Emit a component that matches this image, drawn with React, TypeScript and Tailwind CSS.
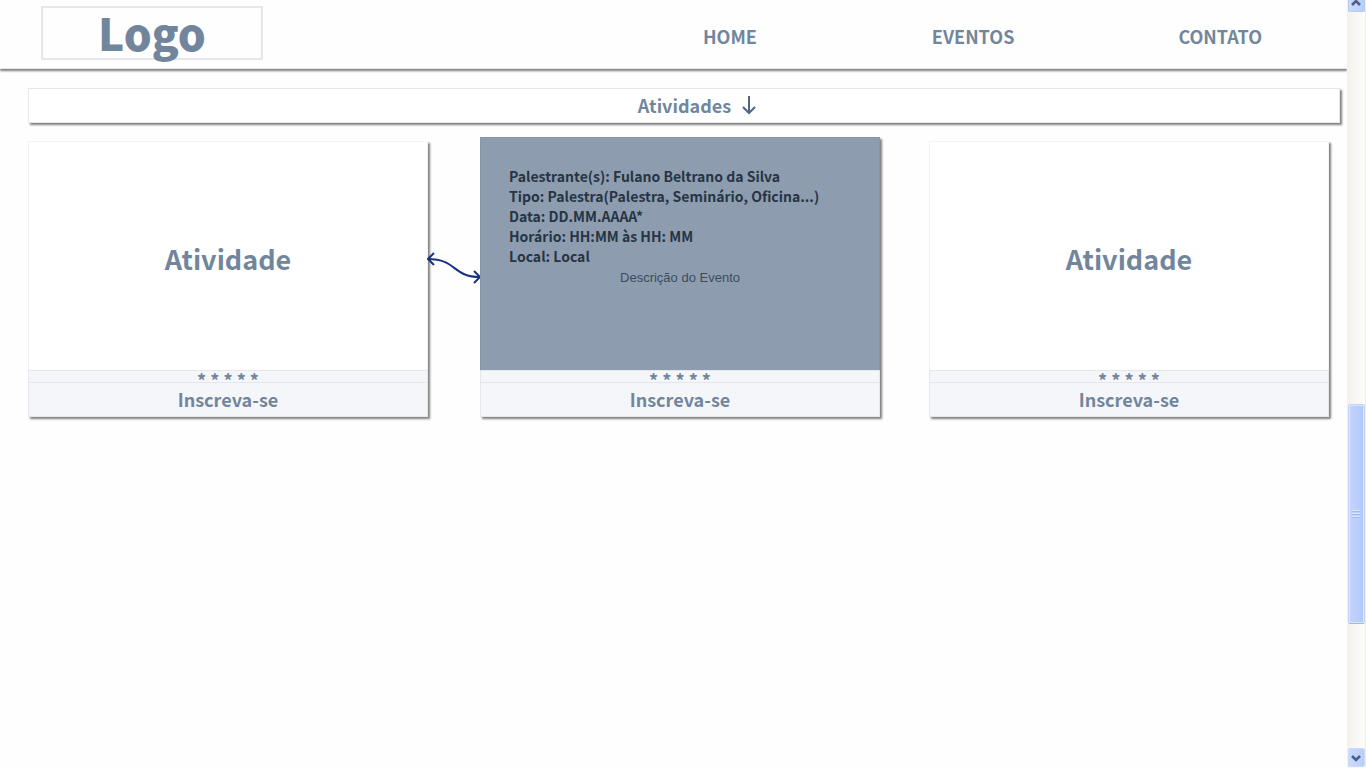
import { ReactNode } from "react";

const NAV_ITEMS = [
  { label: "HOME", href: "#home" },
  { label: "EVENTOS", href: "#eventos" },
  { label: "CONTATO", href: "#contato" },
];

const DETAILS = [
  "Palestrante(s): Fulano Beltrano da Silva",
  "Tipo: Palestra(Palestra, Seminário, Oficina...)",
  "Data: DD.MM.AAAA*",
  "Horário: HH:MM às HH: MM",
  "Local: Local",
];

function Header() {
  return (
    <header className="flex h-[69px] items-start border-b border-[#e4e8ed] pt-[6px] pl-[41px] shadow-[0_2px_2px_#808080]">
      <a
        href="#inicio"
        className="flex h-[54px] w-[222px] items-center justify-center border-2 border-[#e4e8ed] pb-[3px] text-[44px] leading-none font-black"
      >
        Logo
      </a>
      <nav className="ml-auto flex gap-[175px] pt-[15px] pr-[85px] text-[18px] leading-[30px]">
        {NAV_ITEMS.map((item) => (
          <a key={item.label} href={item.href} className="last:-ml-[11px]">
            {item.label}
          </a>
        ))}
      </nav>
    </header>
  );
}

function ActivityCard({ children }: { children: ReactNode }) {
  return (
    <article className="flex min-w-0 flex-col shadow-[2px_2px_2px_#808080]">
      {children}
      <div className="flex h-[12px] items-start justify-center border-x border-t border-[#e4e8ed] bg-[#f5f6fa] text-[18px] leading-[18px]">
        <span>* * * * *</span>
      </div>
      <button
        type="button"
        className="h-[35px] cursor-pointer border border-[#e4e8ed] bg-[#f5f6fa] pb-[2px] text-[18px] leading-[30px]"
      >
        Inscreva-se
      </button>
    </article>
  );
}

function TitlePanel() {
  return (
    <div className="flex h-[229px] items-center justify-center border border-b-0 border-[#f1f3f5] bg-white pt-[6px]">
      <h2 className="text-[27px] leading-[40px]">Atividade</h2>
    </div>
  );
}

function DetailPanel() {
  return (
    <div className="h-[233px] border border-b-0 border-[#8496a9] bg-[#8d9daf] px-[28px] pt-[28px] text-[#273444]">
      <ul className="text-[14px] leading-[20px] whitespace-nowrap">
        {DETAILS.map((line) => (
          <li key={line}>{line}</li>
        ))}
      </ul>
      <p className="pt-[2px] text-center font-['Liberation_Sans',sans-serif] text-[13px] leading-[20px] font-normal text-[#3c4c5e]">
        Descrição do Evento
      </p>
    </div>
  );
}

function Connector() {
  return (
    <svg
      viewBox="0 0 55 36"
      className="mx-[-1px] mb-[131px] h-[36px] w-[55px]"
      fill="none"
      stroke="#1b3281"
      strokeWidth="2"
      aria-hidden="true"
    >
      <path d="M1 9C30 9 25 27 53 27" />
      <path d="M7 3L1 9L7 15M47 21L53 27L47 33" />
    </svg>
  );
}

function Chevron({ up = false }: { up?: boolean }) {
  return (
    <svg viewBox="0 0 10 8" className="h-[8px] w-[10px]" fill="none" stroke="#4d6185" strokeWidth="2.6" aria-hidden="true">
      <path d={up ? "M1 5L5 1L9 5" : "M1 2L5 6L9 2"} />
    </svg>
  );
}

function ScrollRail() {
  return (
    <aside
      aria-label="Rolagem"
      className="flex w-[19px] shrink-0 flex-col items-center border-r border-[#eeede5] bg-linear-to-r from-[#f3f1ec] to-[#fefefb]"
    >
      <button
        type="button"
        aria-label="Rolar para cima"
        className="flex h-[12px] w-[17px] items-start justify-center rounded-b-[2px] border border-t-0 border-[#b4c8f6] bg-linear-to-r from-[#cbdafd] to-[#b7cefc]"
      >
        <Chevron up />
      </button>
      <div className="flex-[392_1_0%]" />
      <div className="flex h-[220px] w-[17px] flex-col items-center justify-center gap-px rounded-[2px] border border-[#c4d4f5] border-b-[#a0bae8] bg-linear-to-r from-[#c6d3fb] to-[#aecbfb] shadow-[inset_0_0_0_1px_#dce7ff]">
        <span className="h-[2px] w-[8px] border-b border-[#9dbcf5] bg-[#dce8ff]" />
        <span className="h-[2px] w-[8px] border-b border-[#9dbcf5] bg-[#dce8ff]" />
        <span className="h-[2px] w-[8px] border-b border-[#9dbcf5] bg-[#dce8ff]" />
      </div>
      <div className="flex-[124_1_0%]" />
      <button
        type="button"
        aria-label="Rolar para baixo"
        className="mb-px flex h-[19px] w-[17px] items-center justify-center rounded-[2px] border border-[#c9d8fb] bg-linear-to-r from-[#cbdafd] to-[#b7cefc]"
      >
        <Chevron />
      </button>
    </aside>
  );
}

export default function App() {
  return (
    <div className="flex min-h-screen bg-[#fefefe] font-['Noto_Sans_CJK_JP',sans-serif] font-bold text-[#71869c]">
      <div className="min-w-0 flex-1">
        <Header />
        <main className="pt-[19px] pr-[7px] pl-[28px]">
          <button
            type="button"
            className="flex h-[35px] w-full cursor-pointer items-center justify-center gap-[11px] border border-[#e4e8ed] bg-white pb-[2px] pl-[26px] text-[18px] leading-[30px] shadow-[2px_2px_2px_#808080]"
          >
            Atividades
            <svg viewBox="0 0 14 20" className="h-[20px] w-[14px]" fill="none" stroke="#4d6684" strokeWidth="2" aria-hidden="true">
              <path d="M7 1V18M1 12L7 18L13 12" />
            </svg>
          </button>
          <div className="mt-[14px] mr-[11px] grid grid-cols-[1fr_52px_1fr_49px_1fr] items-end">
            <ActivityCard>
              <TitlePanel />
            </ActivityCard>
            <Connector />
            <ActivityCard>
              <DetailPanel />
            </ActivityCard>
            <div />
            <ActivityCard>
              <TitlePanel />
            </ActivityCard>
          </div>
        </main>
      </div>
      <ScrollRail />
    </div>
  );
}
